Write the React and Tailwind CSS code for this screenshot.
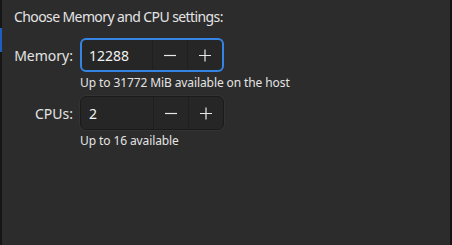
export default function App() {
  const font = { fontFamily: '"Noto Sans", "DejaVu Sans", sans-serif' };
  const Spin = ({ value, focused }) => (
    <div
      className={`flex h-[34px] w-[144px] items-stretch rounded-[6px] bg-[#262626] ${
        focused ? "border-2 border-[#3584e4]" : "border border-[#1b1b1b] shadow-[0_0_0_1px_#333]"
      }`}
    >
      <div className={`flex flex-1 items-center text-[14px] text-[#f2f2f2] ${focused ? "pl-[7px]" : "pl-[8px]"}`}>{value}</div>
      <div className="flex w-[35px] items-center justify-center border-l border-[#1f1f1f] text-[#e8e8e8]">
        <svg width="14" height="14" viewBox="0 0 14 14"><path d="M1 7.5h12" stroke="currentColor" strokeWidth="1.2" /></svg>
      </div>
      <div className="flex w-[35px] items-center justify-center border-l border-[#1f1f1f] text-[#e8e8e8]">
        <svg width="14" height="14" viewBox="0 0 14 14"><path d="M1 7.5h12M7 1.5v12" stroke="currentColor" strokeWidth="1.2" /></svg>
      </div>
    </div>
  );
  return (
    <div className="relative h-[245px] w-[452px] overflow-hidden bg-[#2c2c2c] text-[#e4e4e4]" style={font}>
      <div className="absolute left-0 top-0 h-full w-[2px] bg-[#161616]" />
      <div className="absolute left-0 top-[28px] h-[24px] w-[2px] bg-[#1c5fc0]" />
      <div className="absolute right-0 top-0 h-full w-[2px] bg-[#141414]" />
      <div className="pl-[14px] pt-[7px]">
        <div className="text-[14px] leading-[20px] tracking-[-0.6px]">Choose Memory and CPU settings:</div>
        <div className="mt-[11px] grid grid-cols-[59px_auto] gap-x-[7px]">
          <div className="flex h-[34px] items-center justify-end text-[14px]">Memory:</div>
          <div>
            <Spin value="12288" focused />
            <div className="mt-[3px] text-[12px] leading-[16px] tracking-[-0.1px]">Up to 31772 MiB available on the host</div>
          </div>
          <div className="mt-[5px] flex h-[34px] items-center justify-end text-[14px]">CPUs:</div>
          <div className="mt-[5px]">
            <Spin value="2" />
            <div className="mt-[3px] text-[12px] leading-[16px] tracking-[-0.1px]">Up to 16 available</div>
          </div>
        </div>
      </div>
    </div>
  );
}
